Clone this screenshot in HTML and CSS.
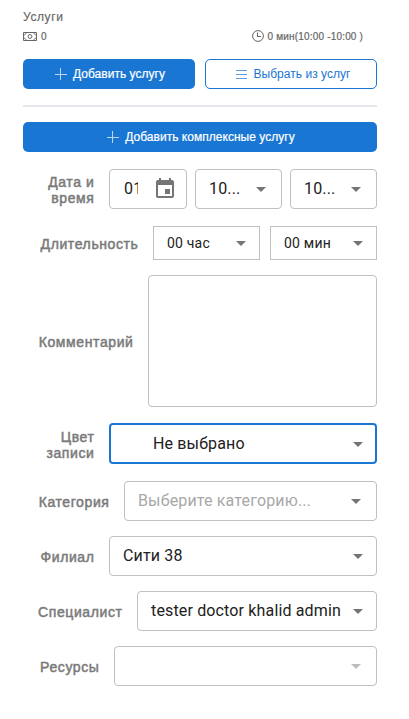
FILE: index.html
```
<!DOCTYPE html>
<html lang="ru">
<head>
<meta charset="utf-8">
<title>Услуги</title>
<link rel="stylesheet" href="styles.css">
</head>
<body>
<main class="page">
  <h1 class="title">Услуги</h1>
  <div class="summary">
    <span class="stat">
      <svg class="cash" width="14" height="9" viewBox="0 0 14 9" fill="none" stroke="currentColor"><path d="M.5.5h13v8H.5zM.5 3C2 3 3 2 3 .5M11 .5C11 2 12 3 13.5 3M.5 6C2 6 3 7 3 8.500M11 8.500C11 7 12 6 13.500 6"/><circle cx="7" cy="4.500" r="1.900"/></svg>
      <span class="cash-value">0</span>
    </span>
    <span class="stat time">
      <svg width="12" height="12" viewBox="0 0 12 12" fill="none" stroke="currentColor"><circle cx="6" cy="6" r="5.400"/><path d="M5.500 2.500v4H9"/></svg>
      <span class="time-value">0 мин(10:00 -10:00 )</span>
    </span>
  </div>
  <div class="actions">
    <button class="btn primary"><svg width="12" height="12" viewBox="0 0 12 12"><path d="M5.500 0v12M0 6.500h12"/></svg><span class="t-add">Добавить услугу</span></button>
    <button class="btn outline"><svg width="12" height="12" viewBox="0 0 12 12"><path d="M0 2.500h11M0 6.500h11M0 10.500h11"/></svg><span class="t-pick">Выбрать из услуг</span></button>
  </div>
  <hr class="rule">
  <button class="btn primary wide"><svg width="12" height="12" viewBox="0 0 12 12"><path d="M5.500 0v12M0 6.500h12"/></svg><span class="t-complex">Добавить комплексные услугу</span></button>

  <div class="row date-row">
    <div class="label">Дата и<br>время</div>
    <div class="controls w268">
      <div class="field date"><span class="day">01</span><svg class="calendar" width="24" height="24" viewBox="0 0 24 24"><path d="M17 12h-5v5h5v-5zM16 1v2H8V1H6v2H5c-1.110 0-1.990.9-1.990 2L3 19c0 1.100.89 2 2 2h14c1.100 0 2-.9 2-2V5c0-1.100-.9-2-2-2h-1V1h-2zm3 18H5V8h14v11z"/></svg></div>
      <div class="field hour"><span class="value">10...</span><i class="arrow inset"></i></div>
      <div class="field hour"><span class="value">10...</span><i class="arrow inset"></i></div>
    </div>
  </div>
  <div class="row duration-row">
    <div class="label">Длительность</div>
    <div class="controls w224">
      <div class="field small"><span class="value">00 час</span><i class="arrow"></i></div>
      <div class="field small"><span class="value">00 мин</span><i class="arrow"></i></div>
    </div>
  </div>
  <div class="row comment-row">
    <div class="label">Комментарий</div>
    <div class="field comment w229"></div>
  </div>
  <div class="row color-row">
    <div class="label">Цвет<br>записи</div>
    <div class="field focused w268"><span class="value">Не выбрано</span><i class="arrow"></i></div>
  </div>
  <div class="row">
    <div class="label">Категория</div>
    <div class="field w253"><span class="value placeholder">Выберите категорию...</span><i class="arrow inset"></i></div>
  </div>
  <div class="row">
    <div class="label">Филиал</div>
    <div class="field w268"><span class="value">Сити 38</span><i class="arrow"></i></div>
  </div>
  <div class="row">
    <div class="label">Специалист</div>
    <div class="field w240"><span class="value">tester doctor khalid admin</span><i class="arrow"></i></div>
  </div>
  <div class="row">
    <div class="label">Ресурсы</div>
    <div class="field w263"><span class="value"></span><i class="arrow inset disabled"></i></div>
  </div>
</main>
</body>
</html>
```
FILE: styles.css
```
* { box-sizing: border-box; }
body {
  margin: 0;
  background: #fff;
  font-family: "Liberation Sans", Arial, sans-serif;
}
.page { width: 377px; padding: 9px 0 0 23px; }
.title { margin: 0; height: 16px; font-size: 12px; line-height: 16px; font-weight: 400; letter-spacing: .6px; color: #666; -webkit-text-stroke: .15px; }
.summary { display: flex; height: 22px; align-items: center; color: #666; font-size: 10px; }
.stat { display: flex; align-items: center; gap: 4px; -webkit-text-stroke: .2px; }
.stat svg { stroke-width: 1; }
.time { margin-left: 205px; gap: 4px; }
.time-value { letter-spacing: .18px; white-space: nowrap; }
.actions { display: flex; gap: 10px; margin-top: 12px; }
.btn {
  width: 172px;
  display: flex;
  align-items: center;
  justify-content: center;
  gap: 6px;
  height: 30px;
  padding: 0 0 0 2px;
  border: 0;
  border-radius: 5px;
  font: 12px "Liberation Sans", Arial, sans-serif;
  letter-spacing: .03px;
  white-space: nowrap;
}
.btn svg { fill: none; stroke: currentColor; opacity: .7; }
.primary { background: #1976d2; color: #fff; -webkit-text-stroke: .2px; }
.outline { border: 1px solid #1976d2; background: #fff; color: #1976d2; padding-left: 4px; }
.rule { height: 2px; margin: 16px 0 15px; border: 0; background: #e4e7eb; }
.wide { width: 100%; }
.row { display: flex; align-items: center; margin-top: 15px; }
.date-row, .duration-row { margin-top: 17px; }
.color-row { margin-top: 16px; margin-bottom: 17px; }
.color-row + .row { margin-top: 0; }
.label {
  flex: 1;
  padding: 2px 14.500px 0 0;
  text-align: right;
  white-space: nowrap;
  font-size: 14px;
  line-height: 16px;
  font-weight: 400;
  -webkit-text-stroke: .5px;
  letter-spacing: .6px;
  color: #7a7a7a;
}
.controls { display: flex; gap: 8px; }
.w224 { width: 224px; gap: 10px; }
.w229 { width: 229px; }
.w240 { width: 240px; }
.w253 { width: 253px; }
.w263 { width: 263px; }
.w268 { width: 268px; }
.field {
  display: flex;
  align-items: center;
  height: 40px;
  padding: 0 13px 1px 13px;
  border: 1px solid #c0c0c0;
  border-radius: 4px;
  font-family: Roboto, sans-serif;
  font-size: 16px;
  letter-spacing: .15px;
  color: #212121;
}
.value { flex: 1; white-space: nowrap; }
.arrow {
  width: 10px;
  height: 5px;
  background: #757575;
  clip-path: polygon(0 0, 100% 0, 50% 100%);
  position: relative;
  top: 1px;
}
.inset { margin-right: 2px; }
.disabled { background: #bdbdbd; }
.date { width: 78px; padding: 0 9px 1px 14px; justify-content: space-between; }
.day { width: 14px; overflow: hidden; }
.calendar { fill: #757575; }
.hour { width: 87px; }
.small { width: 107px; height: 34px; border-radius: 0; font-size: 14px; letter-spacing: .2px; }
.comment { height: 132px; }
.focused { height: 41px; border: 2px solid #1976d2; padding: 0 12px 0 42px; }
.placeholder { color: #a8a8a8; }
```
